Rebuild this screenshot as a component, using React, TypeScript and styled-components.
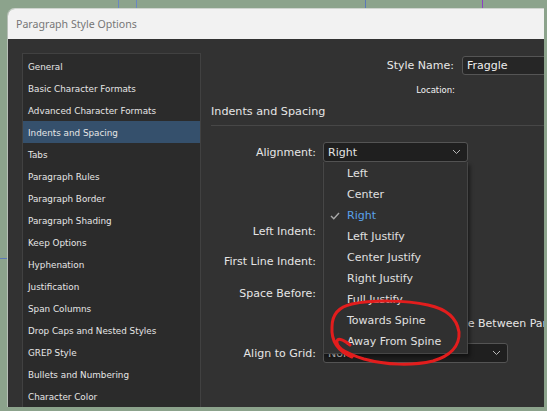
import React from "react";
import styled, { createGlobalStyle } from "styled-components";

const Global = createGlobalStyle`
  html, body { margin: 0; padding: 0; background: #8ca38c; }
  body { font-family: "DejaVu Sans", "Liberation Sans", sans-serif; }
  * { box-sizing: border-box; }
`;

const Desktop = styled.div`
  position: relative;
  width: 547px;
  height: 411px;
  overflow: hidden;
  background: #8ca38c;
  padding: 8px 3px 4px 7px;
`;

const GuideV = styled.span<{ $x: number; $c: string }>`
  position: absolute;
  top: 0;
  left: ${(p) => p.$x}px;
  width: 1px;
  height: 8px;
  background: ${(p) => p.$c};
`;

const GuideH = styled.span<{ $y: number }>`
  position: absolute;
  left: 0;
  top: ${(p) => p.$y}px;
  width: 7px;
  height: 1px;
  background: #5b78b8;
`;

const Window = styled.div`
  width: 537px;
  height: 399px;
  display: flex;
  flex-direction: column;
  border-top: 1px solid #cfd4cf;
  border-left: 1px solid #b7bfb7;
  border-top-left-radius: 8px;
  overflow: hidden;
`;

const TitleBar = styled.div`
  height: 30px;
  flex-shrink: 0;
  display: flex;
  align-items: center;
  padding-left: 8px;
  background: #f2f2f2;
  color: #767676;
  font-family: "Noto Sans", sans-serif;
  font-size: 10.6px;
`;

const Body = styled.div`
  flex: 1;
  display: flex;
  background: #323232;
  padding: 14px 0 0 14px;
  min-height: 0;
`;

const Sidebar = styled.div`
  width: 179px;
  flex-shrink: 0;
  border: 1px solid #414141;
  border-bottom: none;
  background: #2b2b2b;
  display: flex;
  flex-direction: column;
  padding-top: 1px;
`;

const SideItem = styled.div<{ $active?: boolean }>`
  height: 22px;
  flex-shrink: 0;
  display: flex;
  align-items: center;
  padding: 1px 0 0 5px;
  font-size: 8.8px;
  color: #e6e6e6;
  white-space: nowrap;
  background: ${(p) => (p.$active ? "#35506c" : "transparent")};
`;

const Main = styled.div`
  flex: 1;
  min-width: 0;
  display: flex;
  flex-direction: column;
  color: #e2e2e2;
  font-size: 11px;
  padding-top: 1px;
`;

const NameRow = styled.div`
  margin-top: 2px;
  height: 19px;
  display: flex;
  align-items: center;
  gap: 8px;
`;

const NameLabel = styled.div`
  width: 253px;
  flex-shrink: 0;
  text-align: right;
  font-size: 11px;
  color: #e8e8e8;
`;

const NameInput = styled.div`
  width: 120px;
  flex-shrink: 0;
  height: 19px;
  border: 1px solid #555;
  border-radius: 3px;
  background: #262626;
  padding-left: 4px;
  display: flex;
  align-items: center;
  color: #eee;
  font-size: 11px;
`;

const LocationRow = styled.div`
  margin-top: 10px;
  height: 12px;
  width: 254px;
  text-align: right;
  font-size: 8.5px;
  color: #f2f2f2;
`;

const Heading = styled.div`
  margin-top: 8px;
  height: 14px;
  line-height: 14px;
  padding-left: 10px;
  font-size: 11.2px;
  color: #e6e6e6;
`;

const Separator = styled.div`
  margin: 6px 0 0 10px;
  height: 1px;
  background: #474747;
`;

const Form = styled.div`
  margin-top: 16px;
  display: flex;
  flex-direction: column;
`;

const Row = styled.div<{ $gap?: number }>`
  margin-top: ${(p) => p.$gap ?? 0}px;
  height: 20px;
  display: flex;
  align-items: center;
  gap: 7px;
`;

const Label = styled.div`
  width: 115px;
  flex-shrink: 0;
  text-align: right;
  white-space: nowrap;
  color: #e6e6e6;
`;

const Field = styled.div`
  position: relative;
  height: 20px;
`;

const Select = styled.div<{ $w: number }>`
  width: ${(p) => p.$w}px;
  height: 20px;
  border: 1px solid #545454;
  border-radius: 3px;
  background: #1f1f1f;
  display: flex;
  align-items: center;
  justify-content: space-between;
  padding: 0 6px 0 4px;
  color: #e4e4e4;
`;

const FreeText = styled.div<{ $indent: number }>`
  padding-left: ${(p) => p.$indent}px;
  white-space: nowrap;
  color: #e6e6e6;
`;

const Menu = styled.div`
  position: absolute;
  top: 20px;
  left: 0;
  width: 145px;
  padding: 1px 0;
  background: #303030;
  border: 1px solid #464646;
  border-top: none;
  box-shadow: 2px 3px 4px rgba(0, 0, 0, 0.45);
  z-index: 2;
`;

const MenuItem = styled.div<{ $selected?: boolean }>`
  height: 21px;
  display: flex;
  align-items: center;
  padding-left: 6px;
  color: ${(p) => (p.$selected ? "#5aa2ec" : "#e0e0e0")};
  white-space: nowrap;
`;

const Check = styled.span`
  width: 17px;
  display: flex;
  align-items: center;
`;

const Annotation = styled.svg`
  position: absolute;
  left: 0;
  top: 0;
  pointer-events: none;
  z-index: 5;
`;

const Chevron = () => (
  <svg width="9" height="6" viewBox="0 0 9 6">
    <polyline points="1,1 4.5,4.5 8,1" fill="none" stroke="#b8b8b8" strokeWidth="1" />
  </svg>
);

const Tick = () => (
  <svg width="10" height="8" viewBox="0 0 10 8">
    <polyline points="1,4 3.8,6.8 9,1" fill="none" stroke="#a8a8a8" strokeWidth="1.4" />
  </svg>
);

const sections = [
  "General",
  "Basic Character Formats",
  "Advanced Character Formats",
  "Indents and Spacing",
  "Tabs",
  "Paragraph Rules",
  "Paragraph Border",
  "Paragraph Shading",
  "Keep Options",
  "Hyphenation",
  "Justification",
  "Span Columns",
  "Drop Caps and Nested Styles",
  "GREP Style",
  "Bullets and Numbering",
  "Character Color",
];

const alignments = [
  "Left",
  "Center",
  "Right",
  "Left Justify",
  "Center Justify",
  "Right Justify",
  "Full Justify",
  "Towards Spine",
  "Away From Spine",
];

export default function App() {
  return (
    <>
      <Global />
      <Desktop>
        <GuideV $x={118} $c="#6a86c2" />
        <GuideV $x={136} $c="#6a86c2" />
        <GuideV $x={365} $c="#5b78b8" />
        <GuideV $x={482} $c="#8b3fc4" />
        <GuideH $y={258} />
        <Window>
          <TitleBar>Paragraph Style Options</TitleBar>
          <Body>
            <Sidebar>
              {sections.map((s) => (
                <SideItem key={s} $active={s === "Indents and Spacing"}>
                  {s}
                </SideItem>
              ))}
            </Sidebar>
            <Main>
              <NameRow>
                <NameLabel>Style Name:</NameLabel>
                <NameInput>Fraggle</NameInput>
              </NameRow>
              <LocationRow>Location:</LocationRow>
              <Heading>Indents and Spacing</Heading>
              <Separator />
              <Form>
                <Row>
                  <Label>Alignment:</Label>
                  <Field>
                    <Select $w={145}>
                      <span>Right</span>
                      <Chevron />
                    </Select>
                    <Menu>
                      {alignments.map((a) => (
                        <MenuItem key={a} $selected={a === "Right"}>
                          <Check>{a === "Right" ? <Tick /> : null}</Check>
                          {a}
                        </MenuItem>
                      ))}
                    </Menu>
                  </Field>
                </Row>
                <Row $gap={59}>
                  <Label>Left Indent:</Label>
                </Row>
                <Row $gap={10}>
                  <Label>First Line Indent:</Label>
                </Row>
                <Row $gap={12}>
                  <Label>Space Before:</Label>
                </Row>
                <Row $gap={10}>
                  <Label />
                  <FreeText $indent={118}>Space Between Paragraphs Using Same Style:</FreeText>
                </Row>
                <Row $gap={10}>
                  <Label>Align to Grid:</Label>
                  <Field>
                    <Select $w={185}>
                      <span>None</span>
                      <Chevron />
                    </Select>
                  </Field>
                </Row>
              </Form>
            </Main>
          </Body>
        </Window>
        <Annotation width="547" height="411" viewBox="0 0 547 411">
          <path
            d="M 352 357 C 338 351, 331 341, 332 327 C 332 315, 338 307, 352 304 C 372 300, 405 300, 428 305 C 447 309, 457 319, 459 332 C 460 346, 450 356, 433 361 C 412 366, 386 365, 364 359 C 348 354, 338 349, 337 343 C 336 337, 343 339, 350 345"
            fill="none"
            stroke="#e21d1d"
            strokeWidth="3"
            strokeLinecap="round"
            strokeLinejoin="round"
          />
        </Annotation>
      </Desktop>
    </>
  );
}
